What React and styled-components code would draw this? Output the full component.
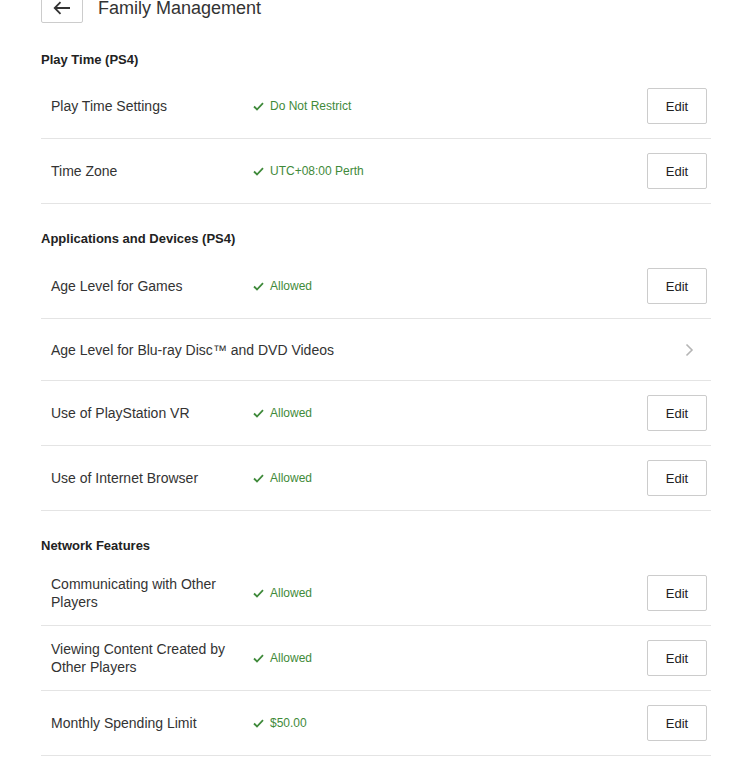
import React from "react";
import styled, { createGlobalStyle } from "styled-components";

const GlobalStyle = createGlobalStyle`
  body {
    margin: 0;
    background: #fff;
    font-family: "Liberation Sans", Arial, sans-serif;
    color: #333;
    overflow: hidden;
  }
`;

const Page = styled.div`
  padding: 0 25px 0 41px;
`;

const Header = styled.div`
  display: flex;
  align-items: flex-start;
  margin-top: -17px;
`;

const BackButton = styled.button`
  width: 42px;
  height: 40px;
  border: 1px solid #ccc;
  border-radius: 2px;
  background: #fff;
  display: flex;
  align-items: flex-end;
  justify-content: center;
  padding: 0 0 7px;
  color: #333;
  cursor: pointer;
`;

const Title = styled.h1`
  margin: 13px 0 0 15px;
  font-size: 18px;
  font-weight: 400;
  line-height: 24px;
  color: #333;
`;

const SectionTitle = styled.h2`
  margin: 0;
  padding: ${(p) => (p.$first ? "29px 0 7px" : "27px 0 8px")};
  font-size: 13px;
  font-weight: 700;
  line-height: 15px;
  color: #222;
`;

const Row = styled.div`
  display: flex;
  align-items: center;
  padding: 14px ${(p) => (p.$link ? "17px" : "4px")} 14px 10px;
  border-bottom: 1px solid #e4e4e4;
`;

const Label = styled.div`
  width: ${(p) => (p.$wide ? "auto" : "185px")};
  flex: ${(p) => (p.$wide ? "1" : "none")};
  padding-right: 17px;
  font-size: 14px;
  line-height: 18px;
  color: #333;
`;

const Status = styled.div`
  flex: 1;
  display: flex;
  align-items: center;
  gap: 6px;
  font-size: 12px;
  color: #3f8a3a;
`;

const EditButton = styled.button`
  width: 60px;
  height: 36px;
  border: 1px solid #ccc;
  border-radius: 2px;
  background: #fff;
  font-family: inherit;
  font-size: 13px;
  color: #222;
  cursor: pointer;
`;

const Chevron = styled.div`
  height: 33px;
  display: flex;
  align-items: center;
  color: #b5b5b5;
`;

const Check = () => (
  <svg width="11" height="9" viewBox="0 0 11 9" fill="none">
    <path d="M1 4.5 L4 7.5 L10 1.2" stroke="#3f8a3a" strokeWidth="1.8" />
  </svg>
);

const sections = [
  {
    title: "Play Time (PS4)",
    rows: [
      { label: "Play Time Settings", status: "Do Not Restrict" },
      { label: "Time Zone", status: "UTC+08:00 Perth" },
    ],
  },
  {
    title: "Applications and Devices (PS4)",
    rows: [
      { label: "Age Level for Games", status: "Allowed" },
      { label: "Age Level for Blu-ray Disc™ and DVD Videos", link: true },
      { label: "Use of PlayStation VR", status: "Allowed" },
      { label: "Use of Internet Browser", status: "Allowed" },
    ],
  },
  {
    title: "Network Features",
    rows: [
      { label: "Communicating with Other Players", status: "Allowed" },
      { label: "Viewing Content Created by Other Players", status: "Allowed" },
      { label: "Monthly Spending Limit", status: "$50.00" },
    ],
  },
];

export default function App() {
  return (
    <>
      <GlobalStyle />
      <Page>
        <Header>
          <BackButton aria-label="Back">
            <svg width="18" height="14" viewBox="0 0 18 14" fill="none">
              <path
                d="M17 7 H2 M7.5 1.2 L1.7 7 L7.5 12.8"
                stroke="#333"
                strokeWidth="1.8"
              />
            </svg>
          </BackButton>
          <Title>Family Management</Title>
        </Header>
        {sections.map((s, i) => (
          <section key={s.title}>
            <SectionTitle $first={i === 0}>{s.title}</SectionTitle>
            {s.rows.map((r) =>
              r.link ? (
                <Row key={r.label} $link>
                  <Label $wide>{r.label}</Label>
                  <Chevron>
                    <svg width="9" height="14" viewBox="0 0 9 14" fill="none">
                      <path d="M1.5 1.5 L7 7 L1.5 12.5" stroke="#b5b5b5" strokeWidth="1.6" />
                    </svg>
                  </Chevron>
                </Row>
              ) : (
                <Row key={r.label}>
                  <Label>{r.label}</Label>
                  <Status>
                    <Check />
                    {r.status}
                  </Status>
                  <EditButton>Edit</EditButton>
                </Row>
              )
            )}
          </section>
        ))}
      </Page>
    </>
  );
}
